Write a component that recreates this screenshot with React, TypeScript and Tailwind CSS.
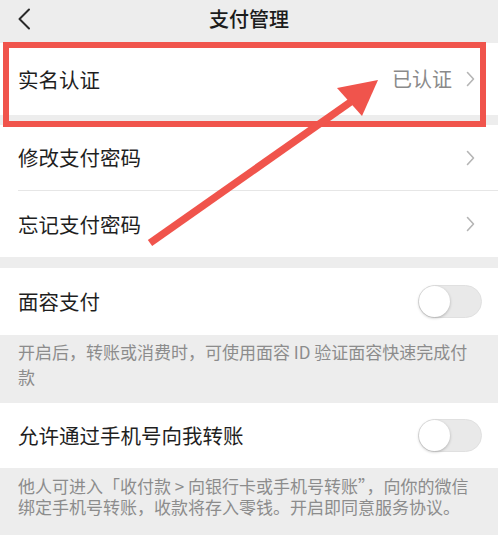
import React from "react";

const Chevron = () => (
  <svg width="9" height="16" viewBox="0 0 9 16" className="shrink-0">
    <path d="M1.5 1.5 L7.5 8 L1.5 14.5" fill="none" stroke="#b5b5b5" strokeWidth="1.6" strokeLinecap="round" strokeLinejoin="round" />
  </svg>
);

const Toggle = () => (
  <div className="relative w-[64px] h-[33px] rounded-full bg-[#e9e9e9] border border-[#e0e0e0] shrink-0">
    <div className="absolute left-[0px] top-[0px] w-[31px] h-[31px] rounded-full bg-white shadow-[0_1px_3px_rgba(0,0,0,0.25)]" />
  </div>
);

export default function App() {
  return (
    <div
      className="relative w-[498px] h-[540px] overflow-hidden bg-[#ededed]"
      style={{ fontFamily: '"Noto Sans CJK SC", "Noto Sans", sans-serif' }}
    >
      {/* Header */}
      <div className="h-[43px] pb-[6px] grid grid-cols-[60px_1fr_60px] items-center">
        <div className="pl-[17px] flex items-center">
          <svg width="14" height="22" viewBox="0 0 14 22">
            <path d="M12 1.5 L2.5 11 L12 20.5" fill="none" stroke="#2a2a2a" strokeWidth="2" strokeLinecap="round" strokeLinejoin="round" />
          </svg>
        </div>
        <div className="text-center text-[20px] font-medium text-[#1c1c1c] leading-none">支付管理</div>
        <div />
      </div>

      {/* Row 1 */}
      <div className="h-[72px] bg-white flex items-center justify-between pl-[18px] pr-[23px]">
        <span className="text-[20.5px] text-[#1f1f1f]">实名认证</span>
        <div className="flex items-center gap-[14px]">
          <span className="text-[20px] text-[#8a8a8a]">已认证</span>
          <Chevron />
        </div>
      </div>

      <div className="h-[10px]" />

      {/* Rows 2-3 */}
      <div className="bg-white">
        <div className="h-[65px] flex items-center justify-between pl-[18px] pr-[23px]">
          <span className="text-[20.5px] text-[#1f1f1f]">修改支付密码</span>
          <Chevron />
        </div>
        <div className="ml-[18px] h-px bg-[#e6e6e6]" />
        <div className="h-[66px] flex items-center justify-between pl-[18px] pr-[23px]">
          <span className="text-[20.5px] text-[#1f1f1f]">忘记支付密码</span>
          <Chevron />
        </div>
      </div>

      <div className="h-[11px]" />

      {/* Face pay */}
      <div className="h-[67px] bg-white flex items-center justify-between pl-[18px] pr-[16px]">
        <span className="text-[20.5px] text-[#1f1f1f]">面容支付</span>
        <Toggle />
      </div>
      <div className="pl-[18px] pr-[20px] pt-[4px] pb-[14px] text-[17px] leading-[25px] text-[#8c8c8c]">
        开启后，转账或消费时，可使用面容 ID 验证面容快速完成付款
      </div>

      {/* Phone transfer */}
      <div className="h-[65px] bg-white flex items-center justify-between pl-[18px] pr-[16px]">
        <span className="text-[20.5px] text-[#1f1f1f]">允许通过手机号向我转账</span>
        <Toggle />
      </div>
      <div className="pl-[18px] pr-[15px] pt-[7px] pb-[18px] text-[17px] leading-[21px] text-[#8c8c8c]">
        他人可进入「收付款 &gt; 向银行卡或手机号转账”，向你的微信绑定手机号转账，收款将存入零钱。开启即同意服务协议。
      </div>
      <div className="h-[20px] bg-white" />

      {/* Annotation: red box */}
      <div className="absolute left-[3px] top-[42px] w-[483px] h-[85px] border-[6px] border-[#f0544c]" />

      {/* Annotation: arrow */}
      <svg className="absolute left-0 top-0" width="498" height="540" viewBox="0 0 498 540">
        <line x1="150" y1="243" x2="352" y2="101" stroke="#f0544c" strokeWidth="7.5" strokeLinecap="butt" />
        <polygon points="378,80 337,88 362,116" fill="#f0544c" />
      </svg>
    </div>
  );
}
